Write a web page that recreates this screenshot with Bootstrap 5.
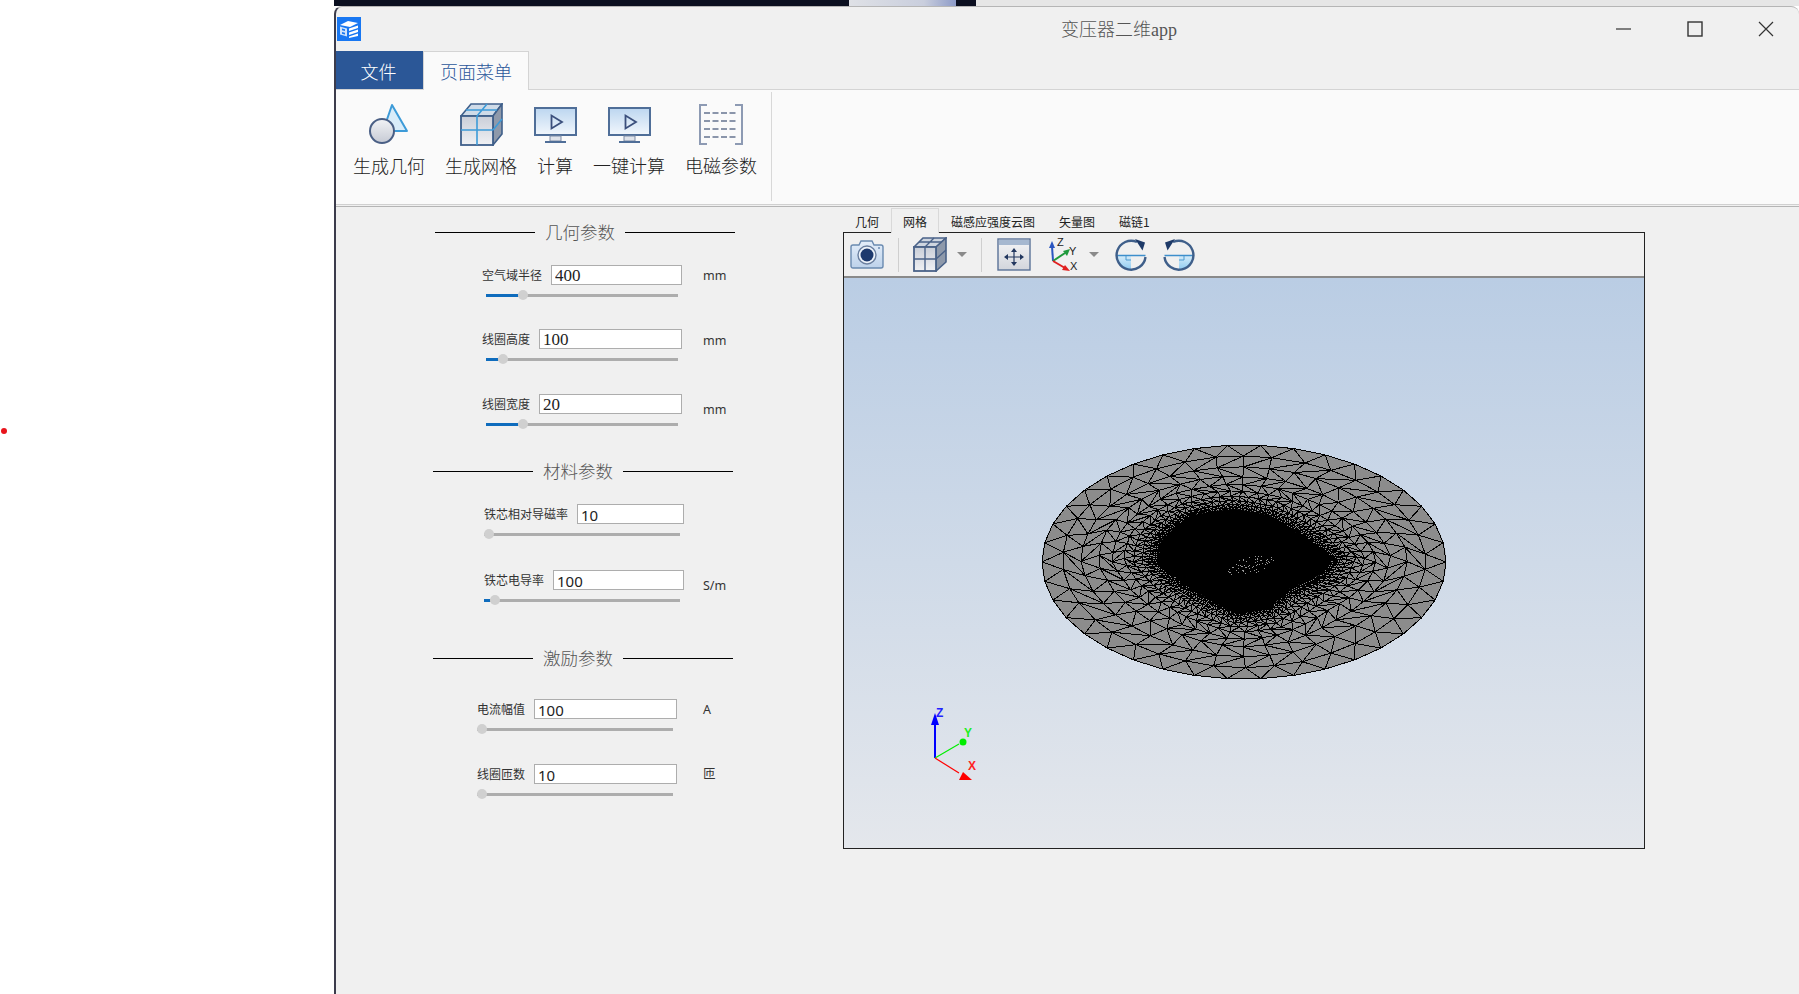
<!DOCTYPE html>
<html lang="zh">
<head>
    <meta charset="UTF-8">
    <meta name="viewport" content="width=device-width, initial-scale=1.0">
    <title>变压器二维app</title>
    <link href="https://cdn.jsdelivr.net/npm/bootstrap@5.3.0/dist/css/bootstrap.min.css" rel="stylesheet">
    <style>
        html, body { height: 994px; overflow: hidden; }
        body { background: #fff; font-family: "Noto Sans CJK SC", "Liberation Sans", sans-serif; color: #333; position: relative; }

        .desk-gap { width: 334px; flex: none; }
        .red-dot { position: absolute; left: 1px; top: 428px; width: 6px; height: 6px; border-radius: 50%; background: #e8141c; }
        .app-col { flex: 1 1 auto; min-width: 0; height: 994px; }
        .top-strip { height: 6px; background: #e6e6e6; }
        .strip-dark { width: 515px; background: #0b0f20; }
        .strip-photo { width: 107px; background: linear-gradient(to right, #dfe1e6, #c9cedd 70%, #8d9bc8); }
        .strip-end { width: 20px; background: #0b0f20; }

        .app-window { height: 988px; background: #f0f0f0; border-left: 2px solid #3c3c4c; border-top: 1px solid #b5b5b5; border-radius: 8px 8px 0 0; }
        .title-row { height: 44px; }
        .app-logo { margin: 10px 0 0 1px; flex: none; }
        .app-title { position: relative; margin: 11px 0 0 700px; width: 400px; font-family: "Liberation Serif", "Noto Sans CJK SC", serif; font-size: 18px; line-height: 24px; color: #555; font-weight: 300; }
        .win-btn { position: absolute; top: 14px; }
        .win-min { left: 1280px; }
        .win-max { left: 1351px; }
        .win-close { left: 1422px; }

        .ribbon-tabs { height: 39px; border-bottom: 1px solid #d4d4d4; }
        .ribbon-tabs .nav-link { height: 39px; border-radius: 0; font-size: 18px; line-height: 24px; padding: 7px 16px 0; border: 1px solid #d4d4d4; border-bottom: 0; background: #fafafa; color: #2b579a; font-weight: 300; margin: 0; }
        .ribbon-tabs .file-tab { width: 87px; padding: 8px 2px 0 0; text-align: center; height: 38px; background: #2b5797; color: #fff; border: 0; }

        .ribbon { height: 115px; background: #fafafa; border-bottom: 1px solid #d0d0d0; padding-left: 7px; }
        .ribbon-btn { flex: none; width: 92px; border: 0; border-radius: 0; padding: 12px 0 0; font-size: 18px; line-height: 24px; color: #222; font-weight: 300; background: transparent; white-space: nowrap; }
        .ribbon-btn-small { width: 56px; }
        .ribbon-ico { height: 45px; margin-bottom: 6px; }
        .ribbon-sep { width: 1px; height: 109px; background: #d8d8d8; margin: 2px 0 0 4px; }

        .work-area { height: 787px; margin-top: 1px; border-top: 1px solid #b5b5b5; }
        .param-pane { width: 507px; flex: none; padding-top: 12px; }

        .sec-head { height: 26px; width: 320px; }
        .sec-head .sec-line { width: 100px; height: 1px; background: #000; }
        .sec-head .sec-line-long { width: 110px; }
        .sec-head .sec-name { width: 90px; text-align: center; font-size: 17.5px; line-height: 26px; color: #555; font-weight: 300; }
        .sec-geo { margin-left: 99px; }
        .sec-mat { margin-left: 97px; margin-top: 29px; }
        .sec-exc { margin-left: 97px; margin-top: 40px; }

        .param { --start: 146px; --unit-gap: 21px; margin-left: var(--start); margin-top: 29px; }
        .param-mat { --start: 148px; --unit-gap: 19px; margin-top: 31px; }
        .param-exc { --start: 141px; --unit-gap: 26px; margin-top: 30px; }
        .param-wide-gap { margin-top: 30px; }
        .param-first { margin-top: 20px; }
        .param-first-exc { margin-top: 28px; }
        .param-line { width: 200px; height: 20px; gap: 9px; flex: none; }
        .param-label { font-size: 12px; line-height: 20px; white-space: nowrap; color: #333; }
        .param-input { flex: 1 1 auto; min-width: 0; height: 20px; min-height: 20px; padding: 1px 3px 0; border: 1px solid #adadad; border-radius: 0; font-size: 15px; line-height: 18px; color: #222; box-shadow: none; font-family: "Noto Sans", sans-serif; }
        .serif-val { font-family: "Liberation Serif", serif; font-size: 17px; }
        .param-unit { margin-left: var(--unit-gap); font-size: 12.5px; line-height: 20px; color: #333; font-family: "Noto Sans", "Noto Sans CJK SC", sans-serif; }
        .unit-low-1 { transform: translateY(1px); }
        .unit-low-2 { transform: translateY(2px); }
        .unit-low-3 { transform: translateY(6px); }

        .param-slider { display: block; height: 10px; width: 196px; margin-top: 5px; padding: 0; }
        .slider-geo { width: 192px; margin-left: 4px; }
        .param-slider::-webkit-slider-runnable-track { height: 3px; border-radius: 0; background: linear-gradient(to right, #0f6cbd var(--fill), #adadad var(--fill)); }
        .param-slider::-webkit-slider-thumb { width: 10px; height: 10px; margin-top: -3.5px; border-radius: 50%; background: #d0d0d0; border: 0; box-shadow: none; }

        .view-pane { width: 802px; flex: none; margin-top: 1px; }
        .view-tabs { height: 25px; border: 0; position: relative; z-index: 1; }
        .view-tabs .nav-link { height: 25px; padding: 4px 11px 0; font-size: 12px; line-height: 18px; color: #222; background: transparent; border: 1px solid transparent; border-bottom: 0; border-radius: 0; margin: 0; }
        .view-tabs .nav-link.active { background: #f0f0f0; border-color: #d9d9d9; color: #222; }
        .view-box { margin-top: -1px; border: 1px solid #222; height: 617px; }
        .view-bar { height: 45px; border-bottom: 2px solid #8a8a8a; background: #f0f0f0; padding-left: 6px; }
        .bar-sep { width: 1px; height: 34px; background: #cfcfcf; margin: 0 14px; }
        .bar-caret { width: 0; height: 0; border-style: solid; border-width: 5px 5px 0; border-color: #8a8a8a transparent transparent; }
        .caret-gap { margin-left: 10px; }
        .pan-gap { margin-left: 1px; }
        .axes-gap { margin-left: 16px; }
        .mesh-view { display: block; width: 800px; height: 570px; background: linear-gradient(to bottom, #bacde4, #e4e7ec); }
        .mesh-view text { font-family: "Liberation Sans", sans-serif; font-weight: 700; font-size: 12px; }
        .axes-ico text { font-family: "Liberation Sans", sans-serif; font-size: 11px; fill: #222; }
    </style>
</head>
<body class="d-flex m-0">
    <div class="red-dot"></div>
    <div class="desk-gap"></div>

    <div class="app-col d-flex flex-column">
        <div class="top-strip d-flex">
            <div class="strip-dark"></div>
            <div class="strip-photo"></div>
            <div class="strip-end"></div>
        </div>

        <div class="app-window position-relative">
            <!-- shared gradients for the icons -->
            <svg width="0" height="0" class="position-absolute">
                <defs>
                    <linearGradient id="gGrey" x1="0" y1="0" x2="0" y2="1"><stop offset="0" stop-color="#c9ced8"/><stop offset="1" stop-color="#f0f1f4"/></linearGradient>
                    <linearGradient id="gCircle" x1="0" y1="0" x2="0" y2="1"><stop offset="0" stop-color="#f2f3f6"/><stop offset="1" stop-color="#c6cad4"/></linearGradient>
                    <linearGradient id="gScreen" x1="0" y1="0" x2="0" y2="1"><stop offset="0" stop-color="#bcd6f0"/><stop offset="1" stop-color="#f2f7fc"/></linearGradient>
                    <linearGradient id="gCam" x1="0" y1="0" x2="0" y2="1"><stop offset="0" stop-color="#e4eefa"/><stop offset="1" stop-color="#bdd2ea"/></linearGradient>
                    <linearGradient id="gPan" x1="0" y1="0" x2="0" y2="1"><stop offset="0" stop-color="#f6f6f7"/><stop offset="1" stop-color="#d2d5dc"/></linearGradient>
                    <linearGradient id="gPie" x1="0" y1="0" x2="0" y2="1"><stop offset="0" stop-color="#d4ebf9"/><stop offset="1" stop-color="#8ecbf0"/></linearGradient>
                    <symbol id="icoMonitor" viewBox="0 0 43 36">
                        <rect x="1" y="1" width="41" height="27" fill="url(#gScreen)" stroke="#4f6e98" stroke-width="2"/>
                        <path d="M17.5 8.5v13l10.5-6.5z" fill="none" stroke="#3b4f7c" stroke-width="1.8"/>
                        <rect x="16" y="29" width="11" height="5" fill="#dfe3ea" stroke="#7c8ba5"/>
                        <path d="M11 35h21" stroke="#4f6e98" stroke-width="2"/>
                    </symbol>
                    <symbol id="icoRotate" viewBox="0 0 32 32">
                        <path d="M2 17h14v14A14.5 14.5 0 0 1 2 17z" fill="url(#gPie)"/>
                        <path d="M1.5 16.500h29" stroke="#3d8fcc" stroke-width="1.5"/>
                        <path d="M11 17v4h5" fill="none" stroke="#4f9bd0"/>
                        <path d="M30.5 18A14.5 14.5 0 1 1 22 3" fill="none" stroke="#3f5f8a" stroke-width="2.4"/>
                        <path d="M20 0l10 3.5-2.500 8z" fill="#1e3a68"/>
                    </symbol>
                </defs>
            </svg>

            <div class="title-row d-flex">
                <svg class="app-logo" width="24" height="24" viewBox="0 0 24 24">
                    <rect width="24" height="24" fill="#1877f2"/>
                    <path d="M3 8l8-4 10 2-8 4z" fill="#fff"/>
                    <path d="M3 9.500l7 2v8l-7-2z" fill="#cfe3fb"/>
                    <path d="M5 11.500l3 .8v1.700l-3-.8zM5 15l3 .8v1.700l-3-.8z" fill="#1877f2"/>
                    <path d="M12 11.500l9-3v2.500l-9 3zM12 15.500l9-3V15l-9 3zM12 19.500l9-3v2.500l-9 2z" fill="#fff"/>
                </svg>
                <div class="app-title">变压器二维app</div>
                <svg class="win-btn win-min" width="16" height="16" viewBox="0 0 16 16"><path d="M0 8h15" stroke="#333" stroke-width="1.2"/></svg>
                <svg class="win-btn win-max" width="16" height="16" viewBox="0 0 16 16"><rect x="1" y="1" width="14" height="14" fill="none" stroke="#333" stroke-width="1.4"/></svg>
                <svg class="win-btn win-close" width="16" height="16" viewBox="0 0 16 16"><path d="M1 1l14 14M15 1L1 15" stroke="#333" stroke-width="1.2"/></svg>
            </div>

            <ul class="nav ribbon-tabs">
                <li class="nav-item"><a class="nav-link file-tab" href="#">文件</a></li>
                <li class="nav-item"><a class="nav-link active" href="#">页面菜单</a></li>
            </ul>

            <div class="ribbon d-flex">
                <button class="btn ribbon-btn d-flex flex-column align-items-center">
                    <span class="ribbon-ico d-flex align-items-center">
                        <svg width="40" height="43" viewBox="0 0 40 43">
                            <path d="M23 2L38 28H14z" fill="#d9ecf9" stroke="#3d9bd8" stroke-width="2" stroke-linejoin="round"/>
                            <circle cx="13" cy="28" r="12" fill="url(#gCircle)" stroke="#4a5f85" stroke-width="2"/>
                        </svg>
                    </span>
                    生成几何
                </button>
                <button class="btn ribbon-btn d-flex flex-column align-items-center">
                    <span class="ribbon-ico d-flex align-items-center">
                        <svg width="43" height="43" viewBox="0 0 43 43">
                            <path d="M1 13L11 1h31L33 13z" fill="#cfdbe8" stroke="#3f5f8a" stroke-width="1.6"/>
                            <path d="M33 13l9-12v30l-9 11z" fill="#8e99aa" stroke="#3f5f8a" stroke-width="1.6"/>
                            <rect x="1" y="13" width="32" height="29" fill="url(#gGrey)" stroke="#3f5f8a" stroke-width="1.8"/>
                            <path d="M17 13v29M1 27h32M17 13L27 1M6 7h31M33 27l9-11" stroke="#3d9bd8" stroke-width="1.6" fill="none"/>
                        </svg>
                    </span>
                    生成网格
                </button>
                <button class="btn ribbon-btn ribbon-btn-small d-flex flex-column align-items-center">
                    <span class="ribbon-ico d-flex align-items-center">
                        <svg width="43" height="36"><use href="#icoMonitor"/></svg>
                    </span>
                    计算
                </button>
                <button class="btn ribbon-btn d-flex flex-column align-items-center">
                    <span class="ribbon-ico d-flex align-items-center">
                        <svg width="43" height="36"><use href="#icoMonitor"/></svg>
                    </span>
                    一键计算
                </button>
                <button class="btn ribbon-btn d-flex flex-column align-items-center">
                    <span class="ribbon-ico d-flex align-items-center">
                        <svg width="46" height="41" viewBox="0 0 46 41">
                            <path d="M9 1H2v39h7M37 1h7v39h-7" fill="none" stroke="#8d9ab3" stroke-width="2"/>
                            <path d="M6 9h34M6 17h34M6 25h34M6 33h34" stroke="#8a95aa" stroke-width="2" stroke-dasharray="6 2.500"/>
                        </svg>
                    </span>
                    电磁参数
                </button>
                <div class="ribbon-sep"></div>
            </div>

            <div class="work-area d-flex">
                <div class="param-pane">
                    <div class="sec-head sec-geo d-flex align-items-center"><span class="sec-line"></span><span class="sec-name">几何参数</span><span class="sec-line sec-line-long"></span></div>

                    <div class="param param-first">
                        <div class="d-flex align-items-center">
                            <div class="param-line d-flex"><label class="param-label">空气域半径</label><input class="form-control param-input serif-val" value="400"></div>
                            <span class="param-unit unit-low-1">mm</span>
                        </div>
                        <input type="range" class="form-range param-slider slider-geo" value="17.6" style="--fill: 32px">
                    </div>
                    <div class="param">
                        <div class="d-flex align-items-center">
                            <div class="param-line d-flex"><label class="param-label">线圈高度</label><input class="form-control param-input serif-val" value="100"></div>
                            <span class="param-unit unit-low-2">mm</span>
                        </div>
                        <input type="range" class="form-range param-slider slider-geo" value="6.6" style="--fill: 12px">
                    </div>
                    <div class="param param-wide-gap">
                        <div class="d-flex align-items-center">
                            <div class="param-line d-flex"><label class="param-label">线圈宽度</label><input class="form-control param-input serif-val" value="20"></div>
                            <span class="param-unit unit-low-3">mm</span>
                        </div>
                        <input type="range" class="form-range param-slider slider-geo" value="17.6" style="--fill: 32px">
                    </div>

                    <div class="sec-head sec-mat d-flex align-items-center"><span class="sec-line"></span><span class="sec-name">材料参数</span><span class="sec-line sec-line-long"></span></div>

                    <div class="param param-mat param-first">
                        <div class="d-flex align-items-center">
                            <div class="param-line d-flex"><label class="param-label">铁芯相对导磁率</label><input class="form-control param-input" value="10"></div>
                        </div>
                        <input type="range" class="form-range param-slider" value="0" style="--fill: 0px">
                    </div>
                    <div class="param param-mat">
                        <div class="d-flex align-items-center">
                            <div class="param-line d-flex"><label class="param-label">铁芯电导率</label><input class="form-control param-input" value="100"></div>
                            <span class="param-unit unit-low-3">S/m</span>
                        </div>
                        <input type="range" class="form-range param-slider" value="3.2" style="--fill: 6px">
                    </div>

                    <div class="sec-head sec-exc d-flex align-items-center"><span class="sec-line"></span><span class="sec-name">激励参数</span><span class="sec-line sec-line-long"></span></div>

                    <div class="param param-exc param-first-exc">
                        <div class="d-flex align-items-center">
                            <div class="param-line d-flex"><label class="param-label">电流幅值</label><input class="form-control param-input" value="100"></div>
                            <span class="param-unit unit-low-1">A</span>
                        </div>
                        <input type="range" class="form-range param-slider" value="0" style="--fill: 0px">
                    </div>
                    <div class="param param-exc">
                        <div class="d-flex align-items-center">
                            <div class="param-line d-flex"><label class="param-label">线圈匝数</label><input class="form-control param-input" value="10"></div>
                            <span class="param-unit">匝</span>
                        </div>
                        <input type="range" class="form-range param-slider" value="0" style="--fill: 0px">
                    </div>
                </div>

                <div class="view-pane">
                    <ul class="nav view-tabs">
                        <li class="nav-item"><a class="nav-link" href="#">几何</a></li>
                        <li class="nav-item"><a class="nav-link active" href="#">网格</a></li>
                        <li class="nav-item"><a class="nav-link" href="#">磁感应强度云图</a></li>
                        <li class="nav-item"><a class="nav-link" href="#">矢量图</a></li>
                        <li class="nav-item"><a class="nav-link" href="#">磁链1</a></li>
                    </ul>
                    <div class="view-box">
                        <div class="view-bar d-flex align-items-center">
                            <svg width="34" height="29" viewBox="0 0 34 29">
                                <path d="M9 5l2-4h11l2 4h7a2 2 0 0 1 2 2v19a2 2 0 0 1-2 2H3a2 2 0 0 1-2-2V7a2 2 0 0 1 2-2z" fill="url(#gCam)" stroke="#6a8ab0" stroke-width="1.4"/>
                                <circle cx="17" cy="15" r="9" fill="#eef4fb" stroke="#6a7f9f" stroke-width="1.4"/>
                                <circle cx="17" cy="15" r="6.500" fill="#1d3a6e"/>
                                <circle cx="29" cy="8" r="1" fill="#6a8ab0"/>
                            </svg>
                            <div class="bar-sep"></div>
                            <svg width="34" height="35" viewBox="0 0 34 35">
                                <path d="M1 10L10 1h23l-10 9z" fill="#cfd6e0" stroke="#4a6288" stroke-width="1.6"/>
                                <path d="M23 10L33 1v24l-10 9z" fill="#8e99aa" stroke="#4a6288" stroke-width="1.6"/>
                                <rect x="1" y="10" width="22" height="24" fill="url(#gGrey)" stroke="#4a6288" stroke-width="1.8"/>
                                <path d="M12 10v24M1 22h22M12 10l9-9M6 5h22M23 22l10-9" stroke="#4a6288" stroke-width="1.4" fill="none"/>
                            </svg>
                            <div class="bar-caret caret-gap"></div>
                            <div class="bar-sep"></div>
                            <svg class="pan-gap" width="34" height="33" viewBox="0 0 34 33">
                                <rect x="1" y="1" width="32" height="31" fill="url(#gPan)" stroke="#5a7298" stroke-width="1.4"/>
                                <rect x="2" y="2" width="30" height="5" fill="#a6b8d0"/>
                                <path d="M17 12v14M9 19h16" stroke="#22375f" stroke-width="1.2"/>
                                <path d="M17 10l3 4h-6zM17 28l3-4h-6zM7 19l4-3v6zM27 19l-4-3v6z" fill="#22375f"/>
                            </svg>
                            <svg class="axes-ico axes-gap" width="34" height="40" viewBox="0 0 34 40">
                                <path d="M6 26L5 11" stroke="#2a55c0" stroke-width="2"/>
                                <path d="M5 6l3 7H2z" fill="#2a55c0"/>
                                <path d="M6 26l12-8" stroke="#1f9a3c" stroke-width="2"/>
                                <path d="M23 14l-3 7-4-5z" fill="#1f9a3c"/>
                                <path d="M6 26l12 7" stroke="#e02020" stroke-width="2"/>
                                <path d="M23 36l-8-1 3-5z" fill="#e02020"/>
                                <text x="10" y="11">Z</text>
                                <text x="22" y="20">Y</text>
                                <text x="23" y="35">X</text>
                            </svg>
                            <div class="bar-caret ms-2"></div>
                            <svg class="ms-3" width="32" height="32"><use href="#icoRotate"/></svg>
                            <svg class="ms-3" width="32" height="32" viewBox="0 0 32 32"><g transform="translate(32 0) scale(-1 1)"><use href="#icoRotate" width="32" height="32"/></g></svg>
                        </div>
                        <svg class="mesh-view" id="meshView" viewBox="0 2 800 570"></svg>
                    </div>
                </div>
            </div>
        </div>
    </div>

    <script>
        // Builds the triangle mesh picture: rings go from the disc edge in to the black middle
        const CX = 400, CY = 286, RX = 202, RY = 117;
        let seed = 11;
        function rnd() {
            seed = (seed * 16807) % 2147483647;
            return seed / 2147483647;
        }

        const blobPts = [[425,335],[470,290],[520,258],[590,245],[650,240],[745,258],[805,295],[865,335],[932,385],[900,432],[805,475],[745,535],[650,550],[565,505],[495,455],[418,397]]
            .map(([x, y]) => [x / 3 + 176, y / 3 + 154]);
        const blobNorm = blobPts.map(([x, y]) => [(x - CX) / RX, (y - CY) / RY]);

        // how far the black shape reaches along angle a, in disc units
        function blobReach(a) {
            const dx = Math.cos(a), dy = Math.sin(a);
            let best = 0;
            blobNorm.forEach((p, i) => {
                const q = blobNorm[(i + 1) % blobNorm.length];
                const ex = q[0] - p[0], ey = q[1] - p[1];
                const det = dx * ey - dy * ex;
                if (Math.abs(det) < 1e-9) return;
                const t = (p[0] * ey - p[1] * ex) / det;
                const s = (p[0] * dy - p[1] * dx) / det;
                if (t > 0 && s >= 0 && s <= 1) best = Math.max(best, t);
            });
            return best;
        }

        const rings = [
            [0, 38], [.17, 38], [.33, 40], [.48, 42], [.6, 48], [.7, 58],
            [.78, 74], [.85, 96], [.91, 130], [.96, 170], [1, 220]
        ];
        const pts = rings.map(([t, n], i) => {
            const list = [];
            const off = i % 2 ? Math.PI / n : 0;
            for (let k = 0; k < n; k++) {
                const jit = i === 0 ? 0 : .16 * (rnd() - .5) * 2 * Math.PI / n;
                const a = off + k * 2 * Math.PI / n + jit;
                const r = (1 - t) + t * blobReach(a) + (i === 0 ? 0 : .006 * (rnd() - .5));
                list.push({ x: CX + RX * r * Math.cos(a), y: CY + RY * r * Math.sin(a) });
            }
            return list;
        });

        let d = '';
        const seg = (p, q) => { d += `M${p.x.toFixed(1)} ${p.y.toFixed(1)}L${q.x.toFixed(1)} ${q.y.toFixed(1)}`; };
        pts.forEach((ring, i) => {
            ring.forEach((p, k) => seg(p, ring[(k + 1) % ring.length]));
            if (i === pts.length - 1) return;
            const inner = pts[i + 1];
            // march round both rings and join them into triangles
            let a = 0, b = 0;
            seg(ring[0], inner[0]);
            while (a < ring.length || b < inner.length) {
                const na = (a + 1) / ring.length, nb = (b + 1) / inner.length;
                if (na <= nb) a++; else b++;
                seg(ring[a % ring.length], inner[b % inner.length]);
            }
        });

        const blob = blobPts.map(([x, y]) => `${x.toFixed(1)},${y.toFixed(1)}`).join(' ');

        // grey specks left open inside the dense part
        let dots = '';
        for (let i = 0; i < 90; i++) {
            const u = (rnd() * 2 - 1) * 23, v = (rnd() * 2 - 1) * 8;
            if ((u * u) / 529 + (v * v) / 64 > 1) continue;
            dots += `<rect x="${Math.round(406 + u + v * .3)}" y="${Math.round(289 + v - u * .28)}" width="1" height="1" fill="#9a9a9a"/>`;
        }

        document.getElementById('meshView').innerHTML = `
            <ellipse cx="${CX}" cy="${CY}" rx="${RX}" ry="${RY}" fill="#8c8c8c"/>
            <path d="${d}" fill="none" stroke="#000" stroke-width="1" shape-rendering="crispEdges"/>
            <polygon points="${blob}" fill="#000" stroke="#000" stroke-width="2"/>
            ${dots}
            <path d="M91 482V446" stroke="#0000ff" stroke-width="1.500" shape-rendering="crispEdges"/>
            <path d="M91 437l4 12h-8z" fill="#0000ff"/>
            <path d="M91 482l24-14" stroke="#00ee00" stroke-width="1.200"/>
            <circle cx="119" cy="466" r="3.500" fill="#00ee00"/>
            <path d="M91 482l24 15" stroke="#ff0000" stroke-width="1.200"/>
            <path d="M119 496l9 8h-13z" fill="#ff0000"/>
            <text x="92" y="441" fill="#2222ff">Z</text>
            <text x="120" y="461" fill="#22ee22">Y</text>
            <text x="124" y="494" fill="#ff2222">X</text>`;
    </script>
    <script src="https://cdn.jsdelivr.net/npm/bootstrap@5.3.0/dist/js/bootstrap.bundle.min.js"></script>
</body>
</html>
